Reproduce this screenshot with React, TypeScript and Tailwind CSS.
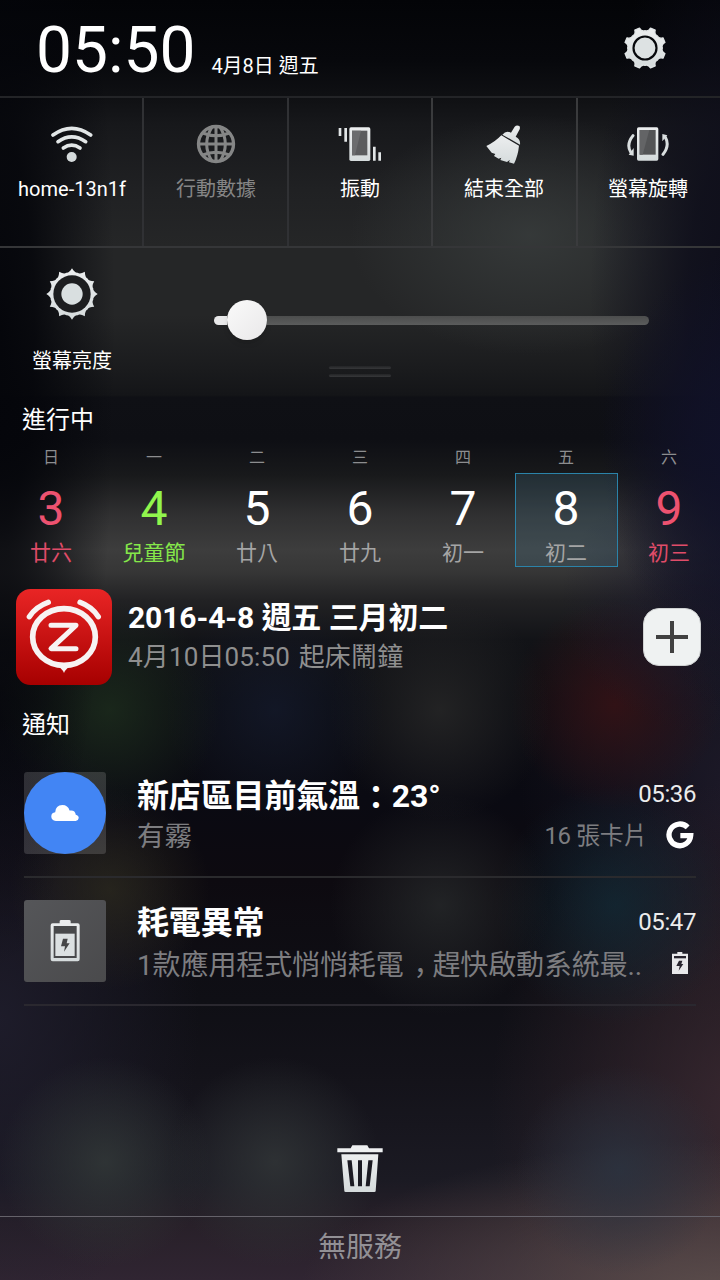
import type { ReactNode } from "react";

const point = (r: number, deg: number) => {
  const a = ((deg - 90) * Math.PI) / 180;
  return `${(r * Math.cos(a)).toFixed(2)} ${(r * Math.sin(a)).toFixed(2)}`;
};

const gearPath =
  Array.from({ length: 8 }, (_, i) => {
    const a = i * 45 + 22.5;
    return `${i ? "L" : "M"}${point(62, a - 7)}L${point(62, a + 7)}Q${point(49, a + 11)} ${point(52, a + 22.5)}Q${point(49, a + 34)} ${point(62, a + 38)}`;
  }).join("") + "Z";

const sunPath =
  Array.from({ length: 12 }, (_, i) => {
    const a = i * 30;
    return `${i ? "" : `M${point(77, a)}`}Q${point(63, a + 8)} ${point(66, a + 15)}Q${point(63, a + 22)} ${point(77, a + 30)}`;
  }).join("") + "Z";

function Gradients() {
  return (
    <svg className="absolute h-0 w-0" aria-hidden="true">
      <defs>
        <linearGradient id="silver" x1="0" y1="0" x2="0" y2="1">
          <stop offset="0" stopColor="#eceeef" />
          <stop offset="1" stopColor="#d5dbdc" />
        </linearGradient>
        <linearGradient id="red" x1="0" y1="0" x2="0" y2="1">
          <stop offset="0" stopColor="#e92525" />
          <stop offset="1" stopColor="#a60000" />
        </linearGradient>
      </defs>
    </svg>
  );
}

function GearIcon() {
  return (
    <svg className="h-11 w-11" viewBox="-66 -66 132 132">
      <path d={gearPath} fill="url(#silver)" stroke="#e0e4e5" strokeWidth="4" strokeLinejoin="round" />
      <circle r="34.5" fill="#dde2e3" stroke="#08090d" strokeWidth="6.5" />
    </svg>
  );
}

function SunIcon() {
  return (
    <svg className="h-[54px] w-[54px]" viewBox="-81 -81 162 162">
      <path d={sunPath} fill="url(#silver)" />
      <circle r="56" fill="#1d1e20" />
      <circle r="32" fill="#d9dfe0" />
    </svg>
  );
}

function WifiIcon() {
  return (
    <svg className="h-11 w-11" viewBox="149 366 132 132" fill="none" stroke="#e2e6e7" strokeWidth="11" strokeLinecap="round">
      <path d="M158 405Q214 365 271 405" />
      <path d="M173 425Q214 396 256 425" />
      <path d="M189 444Q214 427 239 444" />
      <circle cx="214" cy="471" r="15" fill="#d5dbdc" stroke="none" />
    </svg>
  );
}

function GlobeIcon() {
  return (
    <svg className="h-11 w-11" viewBox="583 364 132 132" fill="none" stroke="#858686" strokeWidth="9">
      <circle cx="649" cy="430" r="52.5" strokeWidth="10" />
      <path d="M649 375V485M594 430H704M609 397Q649 413 689 397M609 463Q649 447 689 463" />
      <path d="M638 377Q604 430 638 483M660 377Q694 430 660 483" />
    </svg>
  );
}

function VibrateIcon() {
  return (
    <svg className="h-11 w-11" viewBox="1013 364 132 132">
      <path d="M1015 382h8v24h-8zM1032 382h8v41h-8zM1118 438h8v42h-8zM1134 455h8v25h-8z" fill="#e1e5e6" />
      <rect x="1047" y="380" width="63" height="101" rx="5" fill="url(#silver)" />
      <path d="M1055 390h46v74h-46z" fill="#5b5c5e" />
      <path d="M1055 390h27l-18 74h-9z" fill="#6b6c6e" />
    </svg>
  );
}

function BroomIcon() {
  return (
    <svg className="h-11 w-11" viewBox="366 364 132 132" fill="url(#silver)">
      <path d="M464 378Q470 372 478 376Q481 379 479 386L467 408Q482 415 480 432L427 402Q438 389 453 396Z" />
      <path d="M424 404L477 435Q474 465 462 489L447 485L449 478L441 484L421 478L424 471L416 474L402 466L406 460L395 456L379 436Q405 424 424 404Z" />
    </svg>
  );
}

function RotateIcon() {
  return (
    <svg className="h-11 w-11" viewBox="800 367 132 132">
      <path d="M821 408Q800 434 814 457M911 464Q932 437 918 413" fill="none" stroke="#d9dedf" strokeWidth="9" strokeLinecap="round" />
      <path d="M823 445V468L808 465ZM909 403L924 407L909 425Z" fill="#d9dedf" />
      <rect x="833" y="383" width="64" height="100" rx="5" fill="url(#silver)" />
      <path d="M841 391h48v74h-48z" fill="#535456" />
      <path d="M841 391h29l-20 74h-9z" fill="#636466" />
    </svg>
  );
}

function AlarmAppIcon() {
  return (
    <svg className="h-24 w-24" viewBox="48 447 288 288" fill="none" stroke="#f7f3f3" strokeWidth="15" strokeLinecap="round" strokeLinejoin="round">
      <rect x="48" y="447" width="288" height="288" rx="44" fill="url(#red)" stroke="none" />
      <path d="M88 530Q108 500 145 487M295 530Q275 500 240 487" strokeWidth="16" />
      <ellipse cx="192" cy="591" rx="94" ry="85" strokeWidth="17" />
      <path d="M168 677Q185 682 192 699Q199 682 216 677Z" fill="#f7f3f3" stroke="none" />
      <path d="M153 556H228L153 626H228" />
    </svg>
  );
}

function CloudIcon() {
  return (
    <svg className="h-4 w-7" viewBox="153 311 84 49" fill="#fff">
      <path d="M167 360Q153 358 153 346Q153 334 165 333Q166 312 187 311Q204 311 209 328Q226 325 228 341Q237 343 237 351Q236 359 228 360Z" />
    </svg>
  );
}

function BatteryIcon() {
  return (
    <svg className="h-[42px] w-[30px]" viewBox="151 657 90 126">
      <path d="M180 667V661Q180 657 185 657H208Q213 657 213 661V667H234Q240 667 240 673V775Q240 781 234 781H159Q153 781 153 775V673Q153 667 159 667Z" fill="url(#silver)" />
      <path d="M162 675h69v96h-69z" fill="#48494b" />
      <path d="M167 698h58v67h-58z" fill="#dce1e2" />
      <path d="M190 713H204L201 727H210L193 752L196 736H184Z" fill="#454648" />
    </svg>
  );
}

function SmallBatteryIcon() {
  return (
    <svg className="h-[22px] w-4" viewBox="936 757 48 66">
      <path d="M952 762V757H967V762H984V823H936V762Z" fill="#e8e8ea" />
      <path d="M942 769h36v7h-36z" fill="#28242e" />
      <path d="M957 783H967L964 793H970L956 813L959 799H949Z" fill="#28242e" />
    </svg>
  );
}

function GoogleIcon() {
  return (
    <svg className="h-7 w-7" viewBox="918 362 84 84" fill="none" stroke="#fff" strokeWidth="16">
      <path d="M983 381A32.500 32.500 0 1 0 992 406H961" />
    </svg>
  );
}

function TrashIcon() {
  return (
    <svg className="h-[47px] w-[46px]" viewBox="231 74 138 141">
      <path d="M232 84H272L277 75H322L327 84H368V96H232Z" fill="#eef0f1" />
      <path d="M244 102H355L347 212Q347 215 343 215H257Q253 215 253 212Z" fill="url(#silver)" />
      <path d="M262 120H275L283 198H271ZM294 120H306V198H294ZM325 120H338L329 198H317Z" fill="#1b1a22" />
    </svg>
  );
}

function Tile({ icon, label, className }: { icon: ReactNode; label: string; className: string }) {
  return (
    <div className={`flex h-[148px] flex-col items-center pt-6 ${className}`}>
      {icon}
      <span className="mt-[9px] text-[20px] leading-7">{label}</span>
    </div>
  );
}

const days = [
  { week: "日", day: "3", lunar: "廿六", color: "text-[#ed5270]", sub: "text-[#e04c69]" },
  { week: "一", day: "4", lunar: "兒童節", color: "text-[#91f64d]", sub: "text-[#85e74a]" },
  { week: "二", day: "5", lunar: "廿八", color: "text-white", sub: "text-[#a5a5a5]" },
  { week: "三", day: "6", lunar: "廿九", color: "text-white", sub: "text-[#a5a5a5]" },
  { week: "四", day: "7", lunar: "初一", color: "text-white", sub: "text-[#a5a5a5]" },
  { week: "五", day: "8", lunar: "初二", color: "text-white", sub: "text-[#a5a5a5]", today: true },
  { week: "六", day: "9", lunar: "初三", color: "text-[#ed5270]", sub: "text-[#e04c69]" },
];

export default function App() {
  return (
    <div className="flex h-[1280px] w-[720px] flex-col overflow-hidden bg-[#0d0d15] bg-[radial-gradient(ellipse_115px_640px_at_0px_330px,rgba(4,5,10,0.97)_0%,rgba(4,5,10,0.85)_30%,transparent_100%),radial-gradient(ellipse_150px_200px_at_750px_450px,rgba(17,18,42,0.95)_0%,rgba(17,18,42,0.7)_40%,transparent_100%),radial-gradient(ellipse_150px_420px_at_740px_300px,rgba(13,13,26,0.97)_0%,rgba(14,14,27,0.85)_35%,transparent_100%),radial-gradient(ellipse_180px_140px_at_740px_600px,rgba(28,26,44,0.9)_0%,transparent_100%),radial-gradient(ellipse_180px_120px_at_530px_235px,rgba(56,60,60,0.85),transparent),radial-gradient(circle_110px_at_110px_710px,rgba(29,45,29,0.8),transparent),radial-gradient(circle_110px_at_275px_710px,rgba(21,27,46,0.7),transparent),radial-gradient(circle_110px_at_440px_710px,rgba(40,40,40,0.8),transparent),radial-gradient(circle_105px_at_615px_705px,rgba(54,18,21,0.85),transparent),radial-gradient(circle_100px_at_110px_890px,rgba(46,44,31,0.7),transparent),radial-gradient(circle_110px_at_440px_905px,rgba(40,43,44,0.75),transparent),radial-gradient(circle_120px_at_615px_905px,rgba(17,42,54,0.75),transparent),radial-gradient(circle_105px_at_105px_1162px,rgba(50,56,56,0.85),transparent),radial-gradient(circle_105px_at_275px_1162px,rgba(49,53,55,0.85),transparent),radial-gradient(circle_105px_at_620px_1170px,rgba(43,51,64,0.85),transparent),radial-gradient(ellipse_420px_150px_at_720px_1290px,rgba(92,78,76,0.95),transparent),radial-gradient(ellipse_260px_330px_at_750px_1110px,rgba(60,42,50,0.9),transparent),radial-gradient(ellipse_220px_250px_at_740px_780px,rgba(32,28,44,0.85),transparent),radial-gradient(ellipse_200px_300px_at_0px_1020px,rgba(31,29,44,0.9),transparent),linear-gradient(180deg,#030407_0px,#07080c_60px,#0f1013_96px,#17181b_125px,#202123_190px,#252627_245px,#252627_315px,#1a1b1d_370px,#141518_395px,#0f1015_397px,#0e0f14_440px,#18191b_475px,#303031_515px,#3d3d3d_550px,#363636_572px,#222224_600px,#121317_640px,#0c0d12_700px,#0a0a12_800px,#0d0a10_880px,#0f0f15_1000px,#131219_1070px,#1b1a23_1180px,#282029_1225px,#302532_1280px)] font-[Roboto,'Noto_Sans_CJK_TC',sans-serif] text-white">
      <Gradients />
      <header className="flex h-24 items-start justify-between pt-[13px] pr-[53px] pl-[36px]">
        <div className="flex items-baseline">
          <span className="text-[64px] leading-[75px]">05:50</span>
          <span className="ml-4 translate-y-px text-[20px]">4月8日 週五</span>
        </div>
        <div className="pt-[13px]">
          <GearIcon />
        </div>
      </header>

      <section className="flex h-[152px] border-y-2 border-t-[#232427] border-b-[#353638]">
        <Tile className="w-36 border-r-2 border-[#303134] pl-0.5" icon={<WifiIcon />} label="home-13n1f" />
        <Tile className="w-[145px] border-r-2 border-[#303134] pl-px text-[#858585]" icon={<GlobeIcon />} label="行動數據" />
        <Tile className="w-36 border-r-2 border-[#3a3b3d]" icon={<VibrateIcon />} label="振動" />
        <Tile className="w-[145px] border-r-2 border-[#3a3b3d] pr-px" icon={<BroomIcon />} label="結束全部" />
        <Tile className="w-[142px] pr-0.5" icon={<RotateIcon />} label="螢幕旋轉" />
      </section>

      <section className="flex h-[148px]">
        <div className="flex w-36 flex-col items-center pt-[19px]">
          <SunIcon />
          <span className="mt-[26px] text-[20px] leading-7">螢幕亮度</span>
        </div>
        <div className="flex flex-1 flex-col pt-[52px] pl-[70px]">
          <div className="flex h-10 w-[435px] items-center">
            <div className="h-[9px] w-[13px] rounded-l-full bg-[#e9e9ea]" />
            <div className="h-10 w-10 rounded-full bg-linear-to-br from-[#fafafa] to-[#e9e8e9] shadow-md" />
            <div className="h-[9px] flex-1 rounded-r-full bg-linear-to-b from-[#4c4d4d] to-[#5b5c5c]" />
          </div>
          <div className="mt-[26px] ml-[115px] flex h-[11px] w-[62px] flex-col justify-between">
            <div className="h-[3px] rounded-sm bg-linear-to-b from-[#232426] to-[#37383a]" />
            <div className="h-[3px] rounded-sm bg-linear-to-b from-[#232426] to-[#37383a]" />
          </div>
        </div>
      </section>

      <h2 className="mt-1.5 h-9 pl-[22px] text-[24px] leading-9">進行中</h2>

      <section className="mt-2 flex h-[121px]">
        {days.map((d) => (
          <div key={d.day} className="flex w-[103px] shrink-0 flex-col items-center first:ml-[-0.5px]">
            <span className="h-[27px] text-[16px] leading-6 text-[#8c8d8f]">{d.week}</span>
            <div className={`flex h-[94px] w-[103px] flex-col items-center border ${d.today ? "border-[#2b83a9] bg-[#4a819b]/20" : "border-transparent"}`}>
              <span className={`mt-[7px] text-[48px] leading-[56px] ${d.color}`}>{d.day}</span>
              <span className={`mt-0.5 text-[21px] leading-7 ${d.sub}`}>{d.lunar}</span>
            </div>
          </div>
        ))}
      </section>

      <section className="mt-[22px] flex h-24 pr-[19px] pl-4">
        <AlarmAppIcon />
        <div className="ml-4 flex flex-1 flex-col pt-[9px]">
          <p className="text-[30px] leading-10 font-bold tracking-[-0.1px]">2016-4-8 週五 三月初二</p>
          <p className="text-[26px] leading-[38px] tracking-[0.15px] text-[#8f8f8f] [word-spacing:2px]">4月10日05:50 起床鬧鐘</p>
        </div>
        <div className="mt-[19px] flex h-[58px] w-[58px] items-center justify-center rounded-2xl border border-[#cfd2d2] bg-[#eff2f2]">
          <svg className="h-8 w-8" viewBox="0 0 32 32" fill="#414141">
            <path d="M14 0h4v14h14v4H18v14h-4V18H0v-4h14z" />
          </svg>
        </div>
      </section>

      <h2 className="mt-[22px] h-9 pl-[22px] text-[24px] leading-9">通知</h2>

      <section className="mx-6 mt-[7px]">
        <article className="flex h-32 border-b-2 border-[#2a2a2d] pt-[22px]">
          <div className="h-[82px] w-[82px] rounded-[3px] bg-white/15">
            <div className="flex h-full w-full items-center justify-center rounded-full bg-[#4285f4]">
              <CloudIcon />
            </div>
          </div>
          <div className="ml-[31px] flex-1">
            <div className="flex h-[42px] items-center justify-between">
              <span className="pt-[3px] text-[32px] leading-[42px] font-bold tracking-[-0.15px]">
                新店區目前氣溫<span className="px-2 font-['Noto_Sans_CJK_SC'] [font-feature-settings:'halt']">：</span>23°
              </span>
              <span className="pt-0.5 text-[24px] tracking-[-0.4px] text-[#ececec]">05:36</span>
            </div>
            <div className="flex h-10 items-center text-[#7d7d80]">
              <span className="flex-1 pt-[5px] text-[27.500px] leading-10">有霧</span>
              <span className="pt-[3px] text-[24px] tracking-[-0.4px]">16 張卡片</span>
              <span className="mt-0.5 mr-0.5 ml-[19px]">
                <GoogleIcon />
              </span>
            </div>
          </div>
        </article>
        <article className="flex h-32 border-b-2 border-[#2a282f] pt-[22px]">
          <div className="flex h-[82px] w-[82px] items-center justify-center rounded-[3px] bg-linear-to-br from-[#555659] to-[#4a4a4c]">
            <BatteryIcon />
          </div>
          <div className="ml-[31px] flex-1">
            <div className="flex h-[42px] items-center justify-between">
              <span className="pt-[3px] text-[32px] leading-[42px] font-bold tracking-[-0.15px]">耗電異常</span>
              <span className="pt-0.5 text-[24px] tracking-[-0.4px] text-[#ececec]">05:47</span>
            </div>
            <div className="flex h-10 items-center text-[#7d7d80]">
              <span className="flex-1 pt-1 text-[28px] leading-10 tracking-[-0.12px] whitespace-nowrap">
                1款應用程式悄悄耗電<span className="pr-[5px] pl-[10px] font-['Noto_Sans_CJK_SC'] [font-feature-settings:'halt']">，</span>趕快啟動系統最..
              </span>
              <span className="mt-0.5 mr-2">
                <SmallBatteryIcon />
              </span>
            </div>
          </div>
        </article>
      </section>

      <div className="flex flex-1 items-end justify-center pb-6">
        <TrashIcon />
      </div>
      <footer className="flex h-16 items-center justify-center border-t border-[#65626a] text-[28px] leading-none text-[#929095]">
        <span className="pb-0.5">無服務</span>
      </footer>
    </div>
  );
}
